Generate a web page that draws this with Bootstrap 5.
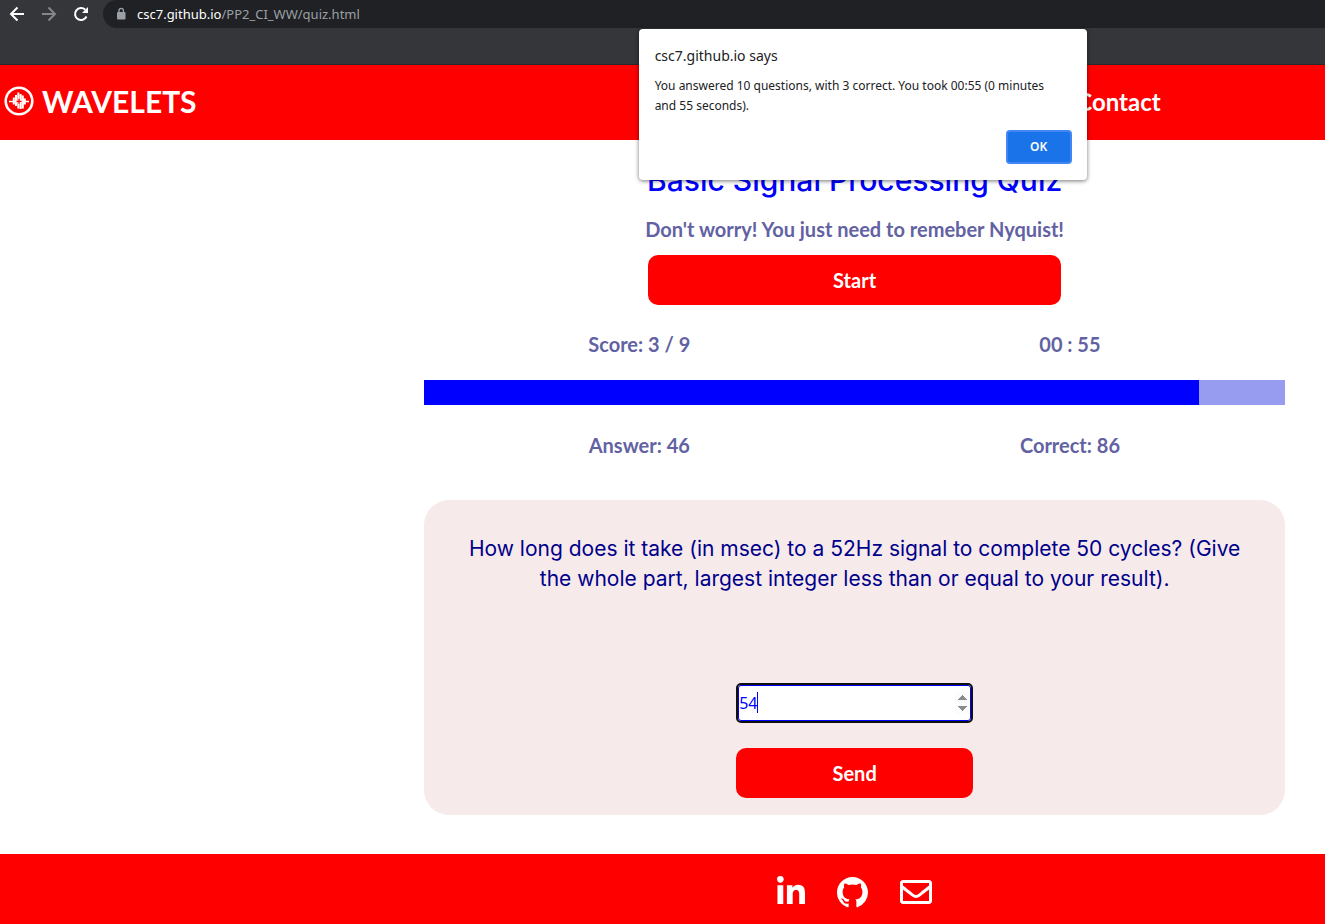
<!DOCTYPE html>
<html lang="en">
<head>
<meta charset="utf-8">
<meta name="viewport" content="width=device-width, initial-scale=1">
<title>Wavelets - Quiz</title>
<link rel="stylesheet" href="https://cdn.jsdelivr.net/npm/bootstrap@5.3.0/dist/css/bootstrap.min.css">
<style>
  body { font-family: Lato, "Open Sans", sans-serif; font-size: 20px; line-height: 30px; background: #fff; }
  .system-font { font-family: "Noto Sans", "Open Sans", sans-serif; }
  .browser-bar { background: #35363a; height: 65px; padding-left: 1px; border-bottom: 1px solid #28292c; }
  .browser-bar button { width: 32px; height: 28px; }
  .address { background: #202124; height: 28px; margin-left: 6px; padding-left: 12px; border-radius: 14px 0 0 14px; font-size: 13px; color: #9aa0a6; }
  .address svg { margin-right: 10px; }
  .site-head { background: #f00; height: 75px; padding: 0 12.4% 0 4px; }
  .brand-name { font-size: 30px; line-height: 40px; font-weight: 700; }
  .site-link { font-size: 24px; font-weight: 700; }
  .offset-area { padding-left: 32%; padding-right: 3%; }
  .quiz-title { color: #00f; font-size: 30px; line-height: 40px; font-weight: 500; font-family: Inter, sans-serif; padding-top: 20px; margin-bottom: 14px; }
  .subtitle { margin-bottom: 11px; }
  .muted-ink { color: #6262a3; font-weight: 700; }
  .red-btn, .red-btn:hover { background: #f00; color: #fff; border: 0; border-radius: 10px; height: 50px; font-size: 20px; font-weight: 700; }
  .start-btn { width: 48%; }
  .quiz-progress { height: 25px; margin: 21px 0 25px; background: #989cf0; border-radius: 0; }
  .quiz-progress .progress-bar { background: #00f; }
  .question-box { background: #f7eaea; border-radius: 25px; padding: 34px 40px 17px; margin: 40px 0 39px; }
  .question { font-family: Inter, sans-serif; font-size: 21px; color: #00008b; min-height: 120px; margin-bottom: 29px; }
  .answer-form { width: 237px; }
  .answer-wrap { padding: 2px; margin-bottom: 25px; }
  .answer-input { height: 36px; border: 1px solid #00f; outline: 2px solid #101010; outline-offset: 0; border-radius: 3px; padding: 0; color: #00f; font-size: 16px; background: #fff; }
  .answer-input::-webkit-inner-spin-button { opacity: 1; }
  .caret-line { left: 21px; top: 9px; width: 1px; height: 21px; background: #00f; }
  .site-foot { background: #f00; height: 70px; padding-top: 6px; }
  .site-foot nav { gap: 32px; }
  .alert-box { left: 48.2%; top: 29px; width: 448px; min-height: 151px; padding: 15px 15px 16px 16px; background: #fff; color: #202124; border-radius: 4px; box-shadow: 0 1px 4px rgba(0,0,0,.55); z-index: 10; }
  .alert-title { font-size: 14px; line-height: 24px; font-weight: 400; margin-bottom: 8px; }
  .alert-text { font-size: 12px; line-height: 20px; margin-bottom: 14px; padding-right: 16px; }
  .ok-btn, .ok-btn:hover { width: 66px; height: 34px; background: #1a73e8; border: 2px solid #4285f4; border-radius: 4px; color: #fff; font-size: 12px; font-weight: 600; }
</style>
</head>
<body class="position-relative">
  <div class="browser-bar d-flex align-items-start system-font">
    <button class="btn p-0 d-flex align-items-center justify-content-center border-0" aria-label="Back">
      <svg width="16" height="16" viewBox="0 0 16 16" fill="none" stroke="#fff" stroke-width="2"><path d="M15 8H2.500M8.500 1.500L2 8l6.500 6.500"/></svg>
    </button>
    <button class="btn p-0 d-flex align-items-center justify-content-center border-0" aria-label="Forward">
      <svg width="16" height="16" viewBox="0 0 16 16" fill="none" stroke="#85868a" stroke-width="2"><path d="M1 8h12.500M7.500 1.500L14 8l-6.500 6.500"/></svg>
    </button>
    <button class="btn p-0 d-flex align-items-center justify-content-center border-0" aria-label="Reload">
      <svg width="16" height="16" viewBox="0 0 16 16" fill="none" stroke="#fff" stroke-width="2"><path d="M13.500 10.500A6 6 0 1 1 12.300 3.800"/><path d="M15 1v6H9z" fill="#fff" stroke="none"/></svg>
    </button>
    <div class="address flex-grow-1 d-flex align-items-center">
      <svg width="12" height="14" viewBox="0 0 12 14"><rect x="2" y="5" width="8.500" height="7.500" rx="1" fill="#9aa0a6"/><path d="M4 5.500V3.500a2.200 2.200 0 0 1 4.400 0v2" fill="none" stroke="#9aa0a6" stroke-width="1.300"/></svg>
      <span><span class="text-white">csc7.github.io</span>/PP2_CI_WW/quiz.html</span>
    </div>
  </div>

  <header class="site-head d-flex align-items-center justify-content-between">
    <a href="#" class="d-flex align-items-center gap-2 pb-1 text-white text-decoration-none">
      <svg width="30" height="30" viewBox="0 0 30 30" fill="none" stroke="#fff">
        <circle cx="15" cy="15" r="13.300" stroke-width="2.600"/>
        <path d="M5 15.500h20" stroke-width="1.500"/>
        <path d="M9.800 11.500v7M12 9v11M14.300 6.500v16M16.600 8v15M18.800 9.500v13M20.800 12.500v6" stroke-width="2"/>
        <path d="M15 12.800v5M12.500 15.300h5" stroke="#f00" stroke-width="1.300"/>
      </svg>
      <span class="brand-name">WAVELETS</span>
    </a>
    <nav><a href="#" class="site-link text-white text-decoration-none">Contact</a></nav>
  </header>

  <main class="offset-area text-center">
    <h1 class="quiz-title">Basic Signal Processing Quiz</h1>
    <p class="muted-ink subtitle">Don't worry! You just need to remeber Nyquist!</p>
    <button class="btn red-btn p-0 start-btn">Start</button>
    <div class="row g-0 muted-ink mt-4">
      <div class="col-6">Score: 3 / 9</div>
      <div class="col-6">00 : 55</div>
    </div>
    <div class="progress quiz-progress" role="progressbar" aria-label="Quiz progress" aria-valuenow="90" aria-valuemin="0" aria-valuemax="100">
      <div class="progress-bar" style="width:90%"></div>
    </div>
    <div class="row g-0 muted-ink">
      <div class="col-6">Answer: 46</div>
      <div class="col-6">Correct: 86</div>
    </div>
    <section class="question-box">
      <p class="question">How long does it take (in msec) to a 52Hz signal to complete 50 cycles? (Give the whole part, largest integer less than or equal to your result).</p>
      <form class="answer-form mx-auto">
        <div class="answer-wrap position-relative d-flex">
          <input class="answer-input system-font w-100" type="number" value="54" aria-label="Your answer">
          <span class="caret-line position-absolute"></span>
        </div>
        <button type="button" class="btn red-btn p-0 w-100">Send</button>
      </form>
    </section>
  </main>

  <footer class="site-foot offset-area d-flex align-items-center justify-content-center">
    <nav class="d-flex align-items-center" aria-label="Social links">
      <a href="#" class="d-flex" aria-label="LinkedIn"><svg width="28" height="32" viewBox="0 0 448 512" fill="#fff"><path d="M100.280 448H7.400V148.900h92.880zM53.790 108.100C24.090 108.100 0 83.500 0 53.800a53.790 53.790 0 0 1 107.580 0c0 29.700-24.100 54.300-53.790 54.300zM447.900 448h-92.680V302.400c0-34.700-.7-79.200-48.290-79.200-48.290 0-55.690 37.700-55.690 76.700V448h-92.780V148.900h89.080v40.800h1.300c12.400-23.500 42.690-48.300 87.880-48.300 94 0 111.280 61.900 111.280 142.300V448z"/></svg></a>
      <a href="#" class="d-flex" aria-label="GitHub"><svg width="31" height="31" viewBox="0 0 16 16" fill="#fff"><path d="M8 0C3.580 0 0 3.580 0 8c0 3.540 2.290 6.530 5.470 7.590.4.070.55-.17.55-.38 0-.19-.01-.82-.01-1.490-2.010.37-2.530-.49-2.690-.94-.09-.23-.48-.94-.82-1.130-.28-.15-.68-.52-.01-.53.63-.01 1.080.58 1.230.82.72 1.210 1.870.87 2.330.66.07-.52.28-.87.51-1.070-1.780-.2-3.640-.89-3.640-3.950 0-.87.31-1.590.82-2.150-.08-.2-.36-1.020.08-2.120 0 0 .67-.21 2.200.82.64-.18 1.320-.27 2-.27s1.360.09 2 .27c1.530-1.040 2.200-.82 2.200-.82.44 1.100.16 1.920.08 2.120.51.56.82 1.270.82 2.150 0 3.070-1.870 3.750-3.650 3.950.29.25.54.73.54 1.480 0 1.070-.01 1.930-.01 2.200 0 .21.15.46.55.38A8.010 8.010 0 0 0 16 8c0-4.420-3.580-8-8-8z"/></svg></a>
      <a href="#" class="d-flex" aria-label="Email"><svg width="32" height="32" viewBox="0 0 512 512" fill="#fff"><path d="M464 64H48C21.490 64 0 85.490 0 112v288c0 26.510 21.490 48 48 48h416c26.510 0 48-21.490 48-48V112c0-26.510-21.490-48-48-48zm0 48v40.805c-22.422 18.259-58.168 46.651-134.587 106.490-16.841 13.247-50.201 45.072-73.413 44.701-23.208.375-56.579-31.459-73.413-44.701C106.180 199.465 70.425 171.067 48 152.805V112h416zM48 400V214.398c22.914 18.251 55.409 43.862 104.938 82.646 21.857 17.205 60.134 55.186 103.062 54.955 42.717.231 80.509-37.199 103.053-54.947 49.528-38.783 82.032-64.401 104.947-82.653V400H48z"/></svg></a>
    </nav>
  </footer>

  <div class="alert-box position-absolute system-font" role="dialog" aria-labelledby="alert-title">
    <h2 class="alert-title" id="alert-title">csc7.github.io says</h2>
    <p class="alert-text">You answered 10 questions, with 3 correct. You took 00:55 (0 minutes and 55 seconds).</p>
    <div class="d-flex justify-content-end"><button class="btn ok-btn p-0">OK</button></div>
  </div>
<script src="https://cdn.jsdelivr.net/npm/bootstrap@5.3.0/dist/js/bootstrap.bundle.min.js"></script>
</body>
</html>
